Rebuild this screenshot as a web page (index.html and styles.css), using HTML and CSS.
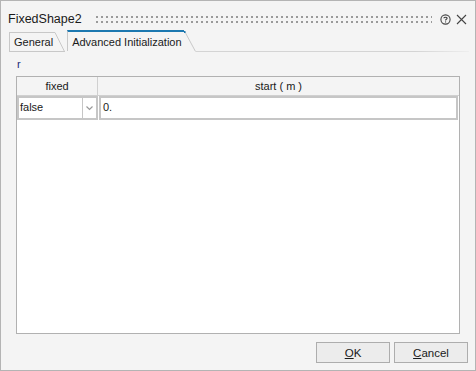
FILE: index.html
```html
<!DOCTYPE html>
<html>
<head>
    <title>FixedShape2</title>
    <link rel="stylesheet" href="styles.css">
</head>
<body>
    <div class="window">
        <header class="titlebar">
            <span class="title">FixedShape2</span>
            <span class="grip"></span>
            <span class="help">
                <svg width="11" height="11" viewBox="0 0 11 11">
                    <circle cx="5.5" cy="5.5" r="4.6" fill="none" stroke="#444" stroke-width="1.1"/>
                    <path d="M3.9 4.3 C3.9 2.9 7.1 2.9 7.1 4.3 C7.1 5.3 5.5 5.3 5.5 6.5" fill="none" stroke="#444" stroke-width="1.1"/>
                    <rect x="5" y="7.4" width="1.1" height="1.1" fill="#444"/>
                </svg>
            </span>
            <span class="close">
                <svg width="11" height="11" viewBox="0 0 11 11">
                    <path d="M1 1 L10 10 M10 1 L1 10" stroke="#444" stroke-width="1.1"/>
                </svg>
            </span>
        </header>

        <nav class="tabs">
            <div class="tab">
                <span class="tab-label">General</span>
                <svg class="slant" width="10" height="20" viewBox="0 0 10 20">
                    <path d="M0 0.5 L9.5 19.5" stroke="#c8c8c8" fill="none"/>
                </svg>
            </div>
            <div class="tab active">
                <span class="tab-label">Advanced Initialization</span>
                <svg class="slant" width="12" height="21" viewBox="0 0 12 21">
                    <path d="M0 0 L1 0 L12 21 L0 21 Z" fill="#f4f4f4"/>
                    <path d="M0 1 L1 1 L11.5 20.5" stroke="#c8c8c8" fill="none"/>
                    <rect x="0" y="0" width="1.5" height="2" fill="#1c78b0"/>
                </svg>
            </div>
            <div class="tab-rest"></div>
        </nav>

        <main class="content">
            <div class="group-label">r</div>
            <div class="grid">
                <div class="grid-head">
                    <div class="col-fixed">fixed</div>
                    <div class="col-start">start ( m )</div>
                </div>
                <div class="grid-row">
                    <div class="combo">
                        <span class="combo-value">false</span>
                        <span class="combo-arrow">
                            <svg width="7" height="5" viewBox="0 0 7 5">
                                <path d="M0.5 0.5 L3.5 3.5 L6.5 0.5" stroke="#999" stroke-width="1.2" fill="none"/>
                            </svg>
                        </span>
                    </div>
                    <div class="edit">0.</div>
                </div>
            </div>
        </main>

        <footer class="buttons">
            <button class="btn"><u>O</u>K</button>
            <button class="btn"><u>C</u>ancel</button>
        </footer>
    </div>
</body>
</html>
```

FILE: styles.css
```css
:root {
    --bg: #f4f4f4;
    --frame: #b4b4b4;
    --line: #c8c8c8;
    --grid-line: #b1b1b1;
    --text: #1a1a1a;
    --accent: #1c78b0;
}

* {
    margin: 0;
    padding: 0;
    box-sizing: border-box;
}

body {
    font-family: 'Liberation Sans', Arial, sans-serif;
    font-size: 11px;
    color: var(--text);
    background: #fff;
}

.window {
    width: 476px;
    height: 371px;
    border: 1px solid var(--frame);
    background: var(--bg);
    display: flex;
    flex-direction: column;
}

.titlebar {
    height: 30px;
    display: flex;
    align-items: center;
    padding: 6px 8px 0 7px;
}

.title {
    font-size: 12.5px;
    margin-right: 14px;
}

/* two rows of dots, 5px apart */
.grip {
    flex: 1;
    height: 7px;
    margin-right: 8px;
    background-image:
        linear-gradient(to right, #9a9a9a 2px, transparent 2px),
        linear-gradient(to right, #9a9a9a 2px, transparent 2px);
    background-size: 5px 2px, 5px 2px;
    background-position: 0 0, 0 5px;
    background-repeat: repeat-x;
}

.help, .close {
    display: flex;
    width: 11px;
    height: 11px;
}

.help {
    margin-right: 5px;
}

.tabs {
    display: flex;
    align-items: flex-end;
    height: 21px;
    padding-left: 8px;
}

.tab {
    display: flex;
    align-items: flex-end;
    height: 20px;
    border-bottom: 1px solid var(--line);
}

.tab-label {
    height: 19px;
    line-height: 18px;
    padding: 0 2px 0 4px;
    border-left: 1px solid var(--line);
    border-top: 1px solid var(--line);
}

.tab .slant {
    display: block;
    margin-bottom: -1px;
}

.tab.active {
    height: 21px;
    margin-left: 2px;
    border-bottom-color: transparent;
}

.tab.active .tab-label {
    height: 21px;
    line-height: 20px;
    border-top: 2px solid var(--accent);
    padding: 0 2px 0 4px;
}

.tab-rest {
    flex: 1;
    height: 1px;
    margin-right: 6px;
    background: linear-gradient(to right, #d4d4d4 80%, #eeeeee);
}

.content {
    flex: 1;
    padding: 6px 16px 0 15px;
    display: flex;
    flex-direction: column;
}

.group-label {
    color: #1e2a78;
    height: 13px;
    line-height: 13px;
    padding-left: 1px;
    margin-bottom: 5px;
}

.grid {
    height: 258px;
    width: 444px;
    border: 1px solid var(--grid-line);
    background: #fff;
}

.grid-head {
    display: flex;
    height: 19px;
    background: var(--bg);
    border-bottom: 1px solid #d0d0d0;
}

.col-fixed, .col-start {
    line-height: 18px;
    text-align: center;
}

.col-fixed {
    width: 81px;
    border-right: 1px solid #d0d0d0;
}

.col-start {
    flex: 1;
}

.grid-row {
    display: flex;
    height: 24px;
    gap: 1px;
}

.combo {
    width: 81px;
    display: flex;
    border: 2px solid #c6c6c6;
}

.combo-value {
    flex: 1;
    line-height: 19px;
    padding-left: 1px;
    border-right: 1px solid #c6c6c6;
}

.combo-arrow {
    width: 13px;
    display: flex;
    align-items: center;
    justify-content: center;
}

.edit {
    flex: 1;
    margin-right: 1px;
    border: 2px solid #c6c6c6;
    line-height: 19px;
    padding-left: 2px;
}

.buttons {
    display: flex;
    justify-content: flex-end;
    gap: 4px;
    height: 36px;
    padding: 8px 7px 0 0;
}

.btn {
    width: 74px;
    height: 21px;
    font-family: inherit;
    font-size: 11.5px;
    color: var(--text);
    background: #ececec;
    border: 1px solid #adadad;
}

.btn u {
    text-decoration-thickness: 1px;
}
```
